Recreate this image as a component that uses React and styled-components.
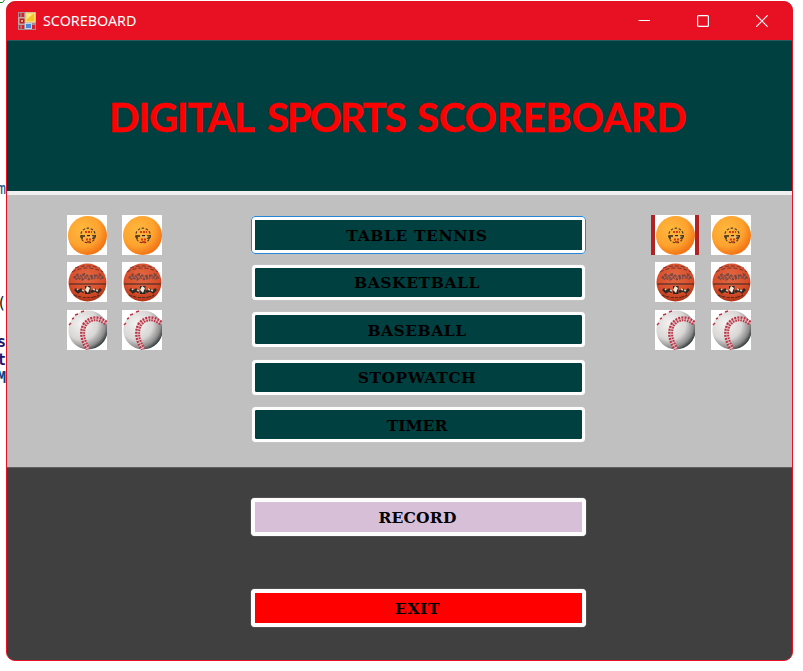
import React from "react";
import styled, { createGlobalStyle } from "styled-components";

const GlobalStyle = createGlobalStyle`
  * { box-sizing: border-box; }
  body { margin: 0; background: #fff; overflow: hidden; }
`;

const Desktop = styled.div`
  display: flex;
  width: 803px;
  height: 671px;
  background: #fff;
`;

const EditorStrip = styled.div`
  flex: none;
  display: grid;
  grid-template-rows: 8px 172px 18px 96px 18px 21px 18px 18px 19px;
  width: 6px;
  height: 671px;
  overflow: hidden;
  direction: rtl;
`;

const CodeLine = styled.span`
  font: ${(p) => (p.$bold ? "bold" : "normal")} 15px/18px "DejaVu Sans Mono", monospace;
  color: ${(p) => p.$color};
  grid-row: ${(p) => p.$row};
  direction: ltr;
  justify-self: end;
  width: 9px;
  margin-left: -3px;
`;

const BraceMark = styled.svg`
  display: block;
  grid-row: 1;
  direction: ltr;
`;

const Window = styled.main`
  display: flex;
  flex-direction: column;
  width: 787px;
  height: 660px;
  margin-top: 1px;
  border: 1px solid #e81123;
  border-radius: 9px;
  overflow: hidden;
  background: #404040;
`;

const TitleBar = styled.header`
  flex: none;
  display: flex;
  align-items: center;
  height: 38px;
  padding: 0 0 1px 11px;
  background: #e81123;
`;

const WindowTitle = styled.span`
  flex: 1;
  margin: -2px 0 0 7px;
  font: 15px/20px "Noto Sans", "Open Sans", sans-serif;
  color: #fff;
  transform: scaleX(${(p) => p.$fit});
  transform-origin: left;
`;

const WindowControls = styled.div`
  display: flex;
  gap: 1px;
  padding-right: 1px;
`;

const ControlButton = styled.button`
  display: grid;
  place-items: center;
  width: 58px;
  height: 38px;
  padding: 0;
  border: 0;
  background: none;
`;

const Banner = styled.section`
  flex: none;
  height: 155px;
  padding-top: 53px;
  border-top: 1px solid #2a5a60;
  border-bottom: 4px solid #f0f0f0;
  background: #004040;
`;

const BannerTitle = styled.h1`
  display: flex;
  margin: 0 0 0 102px;
  font: 700 40px/46px Lato, sans-serif;
  -webkit-text-stroke: 0.4px #f00;
  color: #f00;
`;

const BannerWord = styled.span`
  flex: none;
  width: ${(p) => p.$width}px;
  white-space: nowrap;
  letter-spacing: ${(p) => p.$tracking}px;
`;

const MenuPanel = styled.section`
  flex: none;
  display: flex;
  align-items: flex-start;
  height: 272px;
  padding: 20px 0 0 60px;
  background: #c0c0c0;
`;

const BallGrid = styled.div`
  display: grid;
  grid-template-columns: 40px 40px;
  grid-template-rows: 40px 40px 40px;
  column-gap: ${(p) => p.$gap}px;
  row-gap: 7.4px;
  justify-items: center;
`;

const Photo = styled.div`
  width: ${(p) => (p.$barred ? 48 : 40)}px;
  height: 40px;
  border: 0 solid #b22222;
  border-width: 0 ${(p) => (p.$barred ? 4 : 0)}px;
  background: #fff;
  svg { display: block; }
`;

const ButtonStack = styled.nav`
  flex: none;
  display: flex;
  flex-direction: column;
  align-items: center;
  width: 336px;
  margin: 0 69px 0 88px;
`;

const MenuButton = styled.button`
  flex: none;
  width: ${(p) => (p.$large ? 335 : 333)}px;
  height: ${(p) => (p.$large ? 38 : 35)}px;
  margin: ${(p) => p.$margin};
  padding: 2px 2px 0 0;
  border: ${(p) => (p.$large ? 4 : 3)}px solid #fdfdfd;
  border-radius: 4px;
  box-shadow: 0 0 1px #e5e5e5;
  ${(p) => p.$focused && "border-color: #fff; outline: 1px solid #2685d8; outline-offset: -1px; box-shadow: none;"}
  background: ${(p) => p.$fill};
  background-clip: padding-box;
  font: bold 15.5px/26px "DejaVu Serif", serif;
  letter-spacing: ${(p) => p.$tracking}px;
  white-space: nowrap;
  color: #000;
`;

const ActionPanel = styled.section`
  flex: 1;
  padding: 30px 0 0 244px;
  border-top: 1px solid #606060;
  background: #404040;
`;

function AppIcon() {
  return (
    <svg width="18" height="18" viewBox="0 0 18 18">
      <rect width="18" height="18" fill="#a98f91" />
      <path d="M1 1h5v4H1zM1 13h5v4H1zM14 13h3v4h-3z" fill="#d32333" />
      <path d="M3 1v4M3 13v4" stroke="#b99" />
      <rect x="1" y="6" width="6" height="6" fill="#b8221b" stroke="#ddd" strokeWidth=".7" />
      <rect x="3" y="8" width="2" height="2" fill="#ef9b89" />
      <rect x="8" y="1" width="9" height="9" fill="#f2c52d" stroke="#fff0a0" />
      <path d="M9 2h6L9 7z" fill="#ffe98c" />
      <rect x="7.5" y="11.5" width="6" height="5" fill="#4a88e0" stroke="#bcd8f8" />
    </svg>
  );
}

function TableTennisBall() {
  return (
    <svg width="40" height="40" viewBox="0 0 40 40">
      <defs>
        <radialGradient id="orange" cx=".38" cy=".35" r=".7">
          <stop offset="0" stopColor="#ffb83d" />
          <stop offset=".6" stopColor="#fda32f" />
          <stop offset="1" stopColor="#f06d12" />
        </radialGradient>
      </defs>
      <circle cx="20.5" cy="20.5" r="19.5" fill="url(#orange)" />
      <circle cx="21" cy="20.5" r="7.3" fill="none" stroke="#4d3a25" strokeWidth="1.2" strokeDasharray="2.5 1.6" />
      <path d="M14 21h4m2-.3h3m2 .2h4M14 23h2m9 0h3" stroke="#30281f" strokeWidth="1.4" />
      <path d="M18 17h2m1 0h2m1 0h1" stroke="#d33a16" strokeWidth="1.8" />
      <path d="M19 24.5h2m1 0h2M20 27h3" stroke="#d33a16" strokeWidth="1.8" />
      <path d="M20 22h6" stroke="#e9c99a" />
    </svg>
  );
}

function Basketball() {
  return (
    <svg width="40" height="40" viewBox="0 0 40 40">
      <defs>
        <radialGradient id="leather" cx=".48" cy=".35" r=".65">
          <stop offset="0" stopColor="#e36943" />
          <stop offset=".7" stopColor="#d84d29" />
          <stop offset="1" stopColor="#ad3518" />
        </radialGradient>
      </defs>
      <circle cx="20.5" cy="20.5" r="19" fill="url(#leather)" />
      <path d="M2 22h37" stroke="#372426" strokeWidth="1.1" />
      <path d="M5 10q15-8 31 0M8 6q12-4 25 0" fill="none" stroke="#613236" strokeWidth=".9" strokeDasharray="4 2" />
      <path d="M8 17q3-5 5-2t3 0 3-1 3 2 3-1 3 0 3-1 4 3" fill="none" stroke="#7c4740" strokeWidth="4.500" strokeDasharray="2 .9" />
      <path d="M9 16l3-1 4 1 4-1 5 1 5-1 4 1" fill="none" stroke="#bd6c58" strokeWidth="1.200" strokeDasharray="1.500 2" />
      <path d="M8 27l3 3 3-2 3 2m17-3l-3 3-3-2-4 2" fill="none" stroke="#2d2925" strokeWidth="2.8" />
      <path d="M10 27l1 1m4 0l2 1m12-1l2 1m-5-2l2 1" stroke="#dfc2ac" strokeWidth="1.5" />
      <rect x="18" y="24" width="5.5" height="8" fill="#292724" />
      <path d="M20 24l-2 4 3 3 2-5z" fill="#f5ead9" />
      <path d="M7 33q4 2 8 2m1 .5h10m0-.5q4 0 6-2" fill="none" stroke="#5b2c20" strokeWidth="1.2" strokeDasharray="3 1" />
    </svg>
  );
}

function Baseball() {
  return (
    <svg width="40" height="40" viewBox="0 0 40 40">
      <defs>
        <radialGradient id="hide" cx=".34" cy=".34" r=".74">
          <stop offset="0" stopColor="#f5f3f2" />
          <stop offset=".55" stopColor="#d9d7d6" />
          <stop offset=".82" stopColor="#8e8d8d" />
          <stop offset="1" stopColor="#202a2a" />
        </radialGradient>
      </defs>
      <circle cx="21" cy="20" r="19.6" fill="url(#hide)" />
      <path d="M39 13Q27 4 18 14Q12 25 21 39" fill="none" stroke="#e2cfcd" strokeWidth="4" />
      <path d="M39 13Q27 4 18 14Q12 25 21 39" fill="none" stroke="#bd3045" strokeWidth="5" strokeDasharray="1.8 1.1" />
      <path d="M39 13Q27 4 18 14Q12 25 21 39" fill="none" stroke="#d9bcbc" strokeWidth=".8" />
      <path d="M2 15l2-2M5 9l2-1M8 5l3-1M14 2l3-1" stroke="#bd3348" strokeWidth="1.5" />
    </svg>
  );
}

const ballKinds = [TableTennisBall, Basketball, Baseball];

function Balls({ gap, barred }) {
  return (
    <BallGrid $gap={gap}>
      {ballKinds.map((Ball, i) => (
        <React.Fragment key={i}>
          <Photo $barred={barred && i === 0}><Ball /></Photo>
          <Photo><Ball /></Photo>
        </React.Fragment>
      ))}
    </BallGrid>
  );
}

export default function App() {
  return (
    <Desktop>
      <GlobalStyle />
      <EditorStrip>
        <BraceMark width="6" height="4" viewBox="0 0 6 4">
          <path d="M0 2.5h2.5L4.5 0" fill="none" stroke="#16831b" />
        </BraceMark>
        <CodeLine $row={3} $color="#1b5489">m</CodeLine>
        <CodeLine $row={5} $color="#111">(</CodeLine>
        <CodeLine $row={7} $bold $color="#1c1668">s</CodeLine>
        <CodeLine $row={8} $bold $color="#1c1668">t</CodeLine>
        <CodeLine $row={9} $bold $color="#08437e">M</CodeLine>
      </EditorStrip>
      <Window>
        <TitleBar>
          <AppIcon />
          <WindowTitle $fit={0.955}>SCOREBOARD</WindowTitle>
          <WindowControls>
            <ControlButton aria-label="Minimize">
              <svg width="12" height="12" viewBox="0 0 12 12"><path d="M.5 5.5h11.500" stroke="#fff" /></svg>
            </ControlButton>
            <ControlButton aria-label="Maximize">
              <svg width="12" height="12" viewBox="0 0 12 12"><rect x=".6" y=".6" width="10.8" height="10.8" rx="1" fill="none" stroke="#fff" strokeWidth="1.2" /></svg>
            </ControlButton>
            <ControlButton aria-label="Close">
              <svg width="12" height="12" viewBox="0 0 12 12"><path d="M.3.3l11.4 11.4M11.7.3L.3 11.7" stroke="#fff" strokeWidth="1.2" /></svg>
            </ControlButton>
          </WindowControls>
        </TitleBar>
        <Banner>
          <BannerTitle>
            <BannerWord $width={158} $tracking={-1.2}>DIGITAL</BannerWord>
            <BannerWord $width={150} $tracking={-2.1}>SPORTS</BannerWord>
            <BannerWord $width={270} $tracking={-0.1}>SCOREBOARD</BannerWord>
          </BannerTitle>
        </Banner>
        <MenuPanel>
          <Balls gap={15} />
          <ButtonStack>
            <MenuButton $large $focused $fill="#004040" $margin="1px 0 10.5px" $tracking={0.6}>TABLE TENNIS</MenuButton>
            <MenuButton $fill="#004040" $margin="0 0 12.6px" $tracking={0.6}>BASKETBALL</MenuButton>
            <MenuButton $fill="#004040" $margin="0 0 12.6px" $tracking={0.5}>BASEBALL</MenuButton>
            <MenuButton $fill="#004040" $margin="0 0 12.6px" $tracking={0.5}>STOPWATCH</MenuButton>
            <MenuButton $fill="#004040" $margin="0" $tracking={0}>TIMER</MenuButton>
          </ButtonStack>
          <Balls gap={16} barred />
        </MenuPanel>
        <ActionPanel>
          <MenuButton $large $fill="#d8bfd8" $margin="0 0 53px" $tracking={0.2}>RECORD</MenuButton>
          <MenuButton $large $fill="#f00" $margin="0" $tracking={0.6}>EXIT</MenuButton>
        </ActionPanel>
      </Window>
    </Desktop>
  );
}
